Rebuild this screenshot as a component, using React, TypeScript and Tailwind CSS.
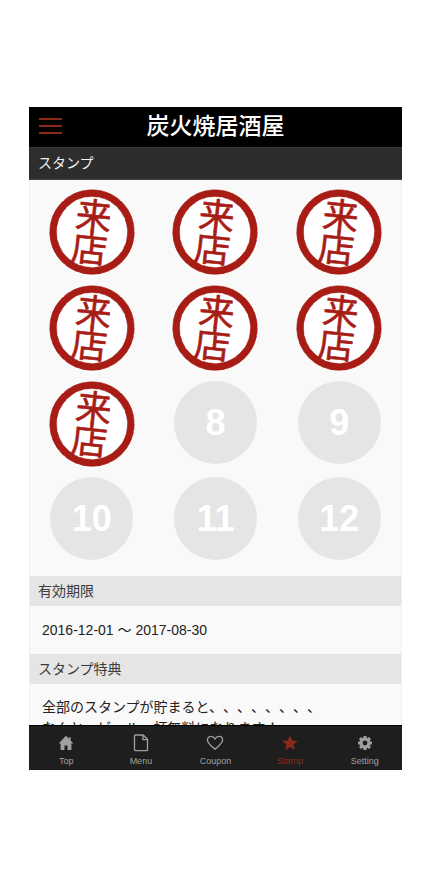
import React from "react";

const PAID_VISITS = 7;
const slots = Array.from({ length: 12 }, (_, i) => i + 1);

function VisitStamp() {
  return (
    <svg viewBox="0 0 88 88" className="mt-1 size-[88px] shrink-0 overflow-visible" role="img" aria-label="来店">
      <circle cx="44" cy="44" r="43" fill="#fff" />
      <circle cx="44" cy="44" r="38.900" fill="#fff" stroke="#a81c16" strokeWidth="6.800" />
      <circle cx="44" cy="44" r="42.200" fill="none" stroke="#a81c16" strokeWidth="0.6" strokeDasharray="7 1 5 0.8 9 1.2" />
      <circle cx="44" cy="44" r="35.500" fill="none" stroke="#a81c16" strokeWidth="0.5" strokeDasharray="9 3 5 4 12 2" />
      <g
        transform="rotate(6 44 44)"
        fill="#a81c16"
        fontSize="36"
        fontWeight="400"
        textAnchor="middle"
        fontFamily="'Noto Sans CJK JP', sans-serif"
        stroke="#a81c16"
        strokeWidth="0.6"
        strokeLinejoin="round"
      >
        <text x="44" y="41">来</text>
        <text x="43" y="74">店</text>
      </g>
    </svg>
  );
}

function EmptySlot({ n }: { n: number }) {
  return (
    <div className="flex size-[83px] items-center justify-center rounded-full bg-[#e5e5e5] pt-0.5 text-4xl font-bold text-white">
      {n}
    </div>
  );
}

function HomeIcon() {
  return (
    <svg viewBox="0 0 16 16" className="size-4" fill="currentColor" aria-hidden="true">
      <path d="M8 .8 .6 8.6h2V15h3.900v-4.600h3V15h3.900V8.600h2L12.600 5.600V2.200h-1.900v1.500z" />
    </svg>
  );
}

function FileIcon() {
  return (
    <svg viewBox="0 0 16 18" className="h-[18px] w-4" fill="none" stroke="currentColor" strokeWidth="1.3" aria-hidden="true">
      <path d="M2.800 1h7.400L14.500 5.300v10.400q0 1-1 1H2.500q-1 0-1-1V2.300Q1.500 1 2.800 1zM10 1v4.600h4.500" />
    </svg>
  );
}

function HeartIcon() {
  return (
    <svg viewBox="0 0 18 16" className="h-4 w-[18px]" fill="none" stroke="currentColor" strokeWidth="1.3" aria-hidden="true">
      <path d="M9 14.300C5 10.800 1.400 8.300 1.400 5.100 1.400 2.900 3.100 1.400 5 1.400c1.800 0 3.100.9 4 2.500.9-1.600 2.200-2.500 4-2.500 1.900 0 3.600 1.500 3.600 3.700 0 3.200-3.600 5.700-7.600 9.200z" />
    </svg>
  );
}

function StarIcon() {
  return (
    <svg viewBox="0 0 16 16" className="size-4" fill="currentColor" aria-hidden="true">
      <path d="M8 .4l2.200 5.200 5.500.4-4.200 3.600 1.400 5.500L8 12.100l-4.900 3 1.400-5.500L.3 6l5.500-.4z" />
    </svg>
  );
}

function GearIcon() {
  return (
    <svg viewBox="0 0 16 16" className="size-4" aria-hidden="true">
      <g fill="currentColor">
        <rect x="6.400" y="1" width="3.200" height="14" rx=".5" />
        <rect x="6.400" y="1" width="3.200" height="14" rx=".5" transform="rotate(45 8 8)" />
        <rect x="6.400" y="1" width="3.200" height="14" rx=".5" transform="rotate(90 8 8)" />
        <rect x="6.400" y="1" width="3.200" height="14" rx=".5" transform="rotate(135 8 8)" />
        <circle cx="8" cy="8" r="5.400" />
      </g>
      <circle cx="8" cy="8" r="2.400" fill="#1e1e1e" />
    </svg>
  );
}

const tabs = [
  { label: "Top", Icon: HomeIcon },
  { label: "Menu", Icon: FileIcon },
  { label: "Coupon", Icon: HeartIcon },
  { label: "Stamp", Icon: StarIcon, active: true },
  { label: "Setting", Icon: GearIcon },
];

function SectionTitle({ children }: { children: React.ReactNode }) {
  return <h2 className="bg-[#e5e5e5] px-2 text-sm leading-[30px] text-[#3c3c3c]">{children}</h2>;
}

export default function App() {
  return (
    <div className="h-screen bg-white pt-[107px] pr-7 pb-[104px] pl-[29px] font-['Liberation_Sans','Noto_Sans_CJK_JP',sans-serif] [text-spacing-trim:space-all]">
      <div className="flex h-full flex-col bg-[#f9f9f9]">
        <header className="grid h-10 shrink-0 grid-cols-[40px_1fr_40px] items-center bg-black">
          <button type="button" aria-label="メニュー" className="flex flex-col gap-[5px] pb-0.5 pl-2.5">
            <span className="h-0.5 w-[23px] bg-[#8b2a16]" />
            <span className="h-0.5 w-[23px] bg-[#8b2a16]" />
            <span className="h-0.5 w-[23px] bg-[#8b2a16]" />
          </button>
          <div className="pb-0.5 text-center text-[23px] leading-8 font-medium text-white">炭火焼居酒屋</div>
        </header>
        <h1 className="h-[33px] shrink-0 border-y border-t-[#383838] border-b-[#444] bg-[#2d2d2d] px-[9px] text-sm leading-[31px] text-[#f0f0f0]">
          スタンプ
        </h1>
        <main className="min-h-0 flex-1 overflow-y-auto border-x border-[#f1f1f1] [scrollbar-width:none]">
          <div className="grid auto-rows-[96px] grid-cols-3 place-items-center pt-[2px] pb-[10px]">
            {slots.map((n) => (n <= PAID_VISITS ? <VisitStamp key={n} /> : <EmptySlot key={n} n={n} />))}
          </div>
          <SectionTitle>有効期限</SectionTitle>
          <p className="px-3 text-sm leading-[48px] text-[#222]">2016-12-01 〜 2017-08-30</p>
          <SectionTitle>スタンプ特典</SectionTitle>
          <p className="px-3 py-[13px] text-sm leading-[21px] text-[#222]">
            全部のスタンプが貯まると、、、、、、、、
            <br />
            なんと、ビール一杯無料になります！
          </p>
        </main>
        <nav className="grid h-[45px] shrink-0 grid-cols-5 border-t border-black bg-[#1e1e1e]">
          {tabs.map(({ label, Icon, active }) => (
            <a
              key={label}
              href={"#" + label.toLowerCase()}
              aria-current={active ? "page" : undefined}
              className={
                active
                  ? "flex flex-col items-center pt-2 text-[9px] leading-3 text-[#8b2a1a]"
                  : "flex flex-col items-center pt-2 text-[9px] leading-3 text-[#a0a0a0]"
              }
            >
              <span className="flex h-[18px] items-center">
                <Icon />
              </span>
              <span className="pt-[3px]">{label}</span>
            </a>
          ))}
        </nav>
      </div>
    </div>
  );
}
